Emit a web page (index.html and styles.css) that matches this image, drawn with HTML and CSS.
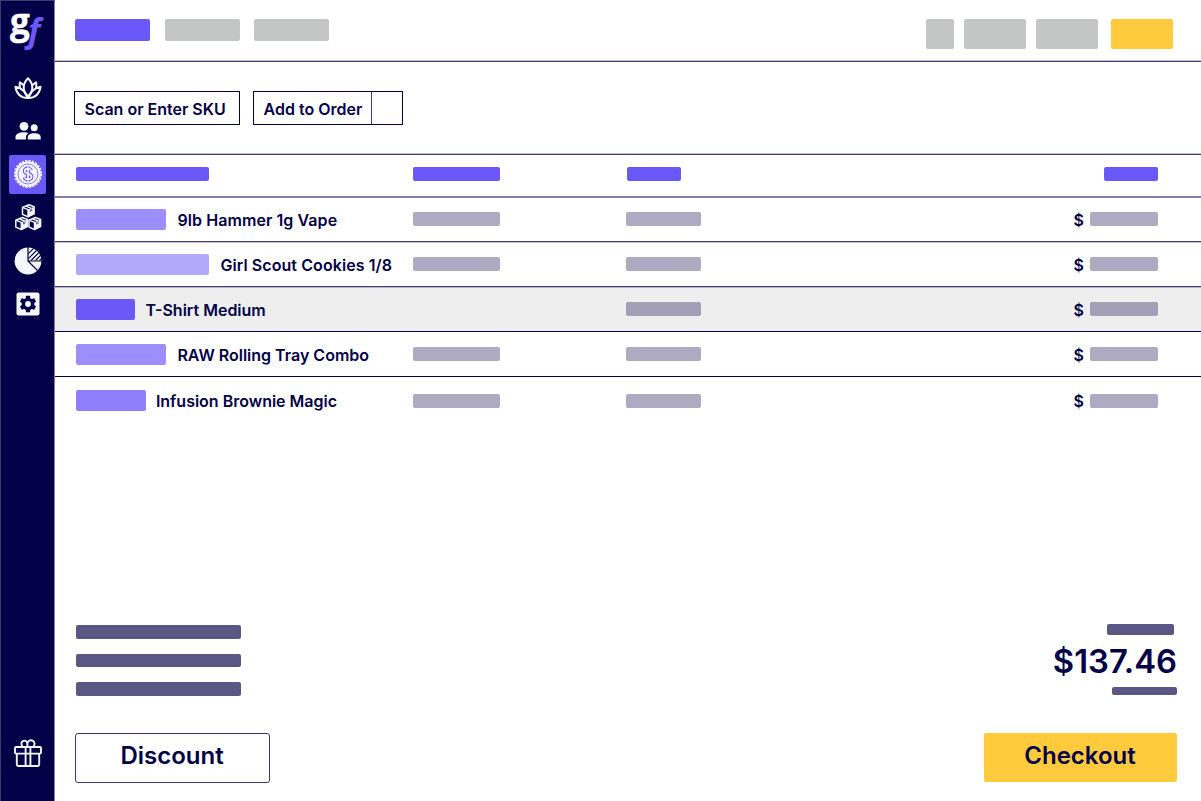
FILE: index.html
```html
<!DOCTYPE html>
<html lang="en">
<head>
<meta charset="utf-8">
<title>Point of sale</title>
<link rel="stylesheet" href="styles.css">
</head>
<body>
<div class="app">
  <aside class="sidebar">
    <div class="logo"><span class="logo-g">g</span><span class="logo-f">f</span></div>
    <nav class="nav">
      <a class="nav-item">
        <svg width="28" height="24" viewBox="0 0 28 24" fill="none" stroke="#f5f5fc" stroke-width="2" stroke-linejoin="round">
          <path d="M14 2.200C10.600 5.500 9.200 9 9.800 13.200C10.400 17 12 19.800 14 21.800C16 19.800 17.600 17 18.200 13.200C18.800 9 17.400 5.500 14 2.200Z"/>
          <path d="M9.900 9.500C8.500 8 7.200 7 5.900 6.300C5.500 8.600 5.600 10.800 6.100 12.900"/>
          <path d="M18.100 9.500C19.500 8 20.800 7 22.100 6.300C22.500 8.600 22.400 10.800 21.900 12.900"/>
          <path d="M14 21.800C12.500 17 7.500 11.500 1.400 10.800C2.500 17 6.500 22 14 21.900C21.500 22 25.500 17 26.600 10.800C20.500 11.500 15.500 17 14 21.800Z"/>
        </svg>
      </a>
      <a class="nav-item">
        <svg width="26" height="20" viewBox="0 0 26 20" fill="#f5f5fc">
          <circle cx="9" cy="5.300" r="4.400"/><circle cx="19.200" cy="6.800" r="3.500"/>
          <path d="M.5 18.500V16C.5 12.900 4 11.200 8.800 11.200C10.900 11.200 12.400 11.500 13.500 12C11.900 13.100 11 14.500 11 16.300V18.500Z"/>
          <path d="M12.800 18.500V16.300C12.800 13.700 15.500 12.300 19.300 12.300C23.100 12.300 25.700 13.700 25.700 16.300V18.500Z"/>
        </svg>
      </a>
      <a class="nav-item active">
        <svg width="30" height="30" viewBox="0 0 30 30">
          <circle cx="15" cy="15" r="12.600" fill="#f5f5fc"/>
          <circle cx="15" cy="15" r="13" fill="none" stroke="#f5f5fc" stroke-width="2" stroke-dasharray="2.300 1.103"/>
          <circle cx="15" cy="15" r="10" fill="none" stroke="#6b58f8" stroke-width=".8"/>
          <path d="M18.300 11.400C17.500 10.200 16.400 9.700 14.900 9.700C12.900 9.700 11.700 10.700 11.700 12.200C11.700 15.700 18.500 14 18.500 17.600C18.500 19.300 17.100 20.300 15.100 20.300C13.300 20.300 12 19.600 11.400 18.200M15 7.600V22.400" fill="none" stroke="#6b58f8" stroke-width="3.800"/>
          <path d="M18.200 11.500C17.500 10.200 16.400 9.700 14.900 9.700C12.900 9.700 11.700 10.700 11.700 12.200C11.700 15.700 18.500 14 18.500 17.600C18.500 19.300 17.100 20.300 15.100 20.300C13.300 20.300 12 19.600 11.600 18.400M15 8.100V21.900" fill="none" stroke="#f5f5fc" stroke-width="1.700"/>
        </svg>
      </a>
      <a class="nav-item">
        <svg width="28" height="28" viewBox="0 0 28 28">
          <defs>
            <g id="cube" stroke-linejoin="round">
              <path d="M1 3.600L7.400 1L12.600 3V10L6.500 13L1 10.600Z" fill="#020046" stroke="#f5f5fc" stroke-width="1.500"/>
              <path d="M6.500 5.800L12.600 3V10L6.500 13Z" fill="#f5f5fc"/>
              <path d="M1 3.600L6.500 5.800V13M4.400 2.300L9.900 4.500" fill="none" stroke="#f5f5fc" stroke-width="1.400"/>
              <path d="M8.700 5.400V7.600L10.200 6.900V4.700" fill="none" stroke="#020046" stroke-width=".6"/>
            </g>
          </defs>
          <use href="#cube" x="7.500" y="0.800"/><use href="#cube" x="0.800" y="13.500"/><use href="#cube" x="14" y="13.500"/>
        </svg>
      </a>
      <a class="nav-item">
        <svg width="28" height="28" viewBox="0 0 28 28">
          <defs><clipPath id="quarter"><path d="M14.300 13.400V.5A13.200 13.200 0 0 1 27.200 13.400Z"/></clipPath></defs>
          <circle cx="14" cy="14" r="13.400" fill="#f5f5fc"/>
          <path d="M14 0V14H28M14 14L23.500 23.500" fill="none" stroke="#020046" stroke-width="1.200"/>
          <g clip-path="url(#quarter)" stroke="#020046" stroke-width="1.200">
            <path d="M10 11L22-1M12 14L27-1M16 14.500L31-.5M20.500 14.500L35 0M25 14L38 1"/>
          </g>
        </svg>
      </a>
      <a class="nav-item">
        <svg width="24" height="24" viewBox="0 0 24 24">
          <rect x=".5" y=".5" width="23" height="23" rx="2" fill="#f5f5fc"/>
          <g fill="#020046">
            <circle cx="12" cy="12" r="6.300"/>
            <rect x="9.900" y="3.800" width="4.200" height="16.400" rx=".5"/><rect x="9.900" y="3.800" width="4.200" height="16.400" rx=".5" transform="rotate(60 12 12)"/><rect x="9.900" y="3.800" width="4.200" height="16.400" rx=".5" transform="rotate(120 12 12)"/>
          </g>
          <circle cx="12" cy="12" r="2.900" fill="#f5f5fc"/>
        </svg>
      </a>
    </nav>
    <a class="gift">
      <svg width="28" height="30" viewBox="0 0 28 30" fill="none" stroke="#f5f5fc" stroke-width="1.900">
        <rect x="1" y="9" width="26" height="6.600" rx="1"/>
        <path d="M2.800 15.600V26.500Q2.800 28 4.300 28H23.700Q25.200 28 25.200 26.500V15.600M11.600 9V28M16.400 9V28"/>
        <path d="M13.300 8.500V5A3 3 0 1 0 8.500 8M13.400 9V5.500A3.600 3.600 0 1 1 19.500 8.500"/>
      </svg>
    </a>
  </aside>
  <main class="main">
    <header class="topbar">
      <div class="tabs"><span class="tab current"></span><span class="tab"></span><span class="tab"></span></div>
      <div class="actions"><span class="action small"></span><span class="action"></span><span class="action"></span><span class="action primary"></span></div>
    </header>
    <hr class="rule late">
    <section class="toolbar">
      <div class="sku">Scan or Enter SKU</div>
      <div class="add"><span class="add-label">Add to Order</span><span class="add-more"></span></div>
    </section>
    <hr class="rule late">
    <section class="table">
      <div class="row head"><span class="bar wide"></span><span class="bar category"></span><span class="bar qty"></span><span class="bar price"></span></div>
      <hr class="rule even">
      <div class="row"><div class="product"><span class="swatch violet w90"></span><span class="name roomy">9lb Hammer 1g Vape</span></div><span class="bar category"></span><span class="bar qty"></span><div class="cost">$<span class="bar"></span></div></div>
      <hr class="rule early">
      <div class="row"><div class="product"><span class="swatch pale w133"></span><span class="name roomy">Girl Scout Cookies 1/8</span></div><span class="bar category"></span><span class="bar qty"></span><div class="cost">$<span class="bar"></span></div></div>
      <hr class="rule early selected-rule">
      <div class="row selected"><div class="product"><span class="swatch strong w59"></span><span class="name">T-Shirt Medium</span></div><span></span><span class="bar qty"></span><div class="cost">$<span class="bar"></span></div></div>
      <hr class="rule single">
      <div class="row tall"><div class="product"><span class="swatch violet w90"></span><span class="name">RAW Rolling Tray Combo</span></div><span class="bar category"></span><span class="bar qty"></span><div class="cost">$<span class="bar"></span></div></div>
      <hr class="rule single">
      <div class="row last"><div class="product"><span class="swatch medium w69"></span><span class="name">Infusion Brownie Magic</span></div><span class="bar category"></span><span class="bar qty"></span><div class="cost">$<span class="bar"></span></div></div>
    </section>
    <footer class="footer">
      <div class="summary"><span class="line"></span><span class="line"></span><span class="line"></span><div class="button discount">Discount</div></div>
      <div class="totals"><span class="line due"></span><div class="total">$137.46</div><span class="line tax"></span><div class="button checkout">Checkout</div></div>
    </footer>
  </main>
</div>
</body>
</html>
```
FILE: styles.css
```css
* { box-sizing: border-box; }
body { margin: 0; font-family: Inter, sans-serif; color: #020046; background: #fff; overflow: hidden; }
.app { display: flex; width: 1201px; height: 801px; }

.sidebar { width: 55px; flex: none; display: flex; flex-direction: column; background: #020046; border: 1px solid #3d3b72; border-right-color: #817fa3; border-bottom: 0; }
.logo { height: 67px; padding-left: 9px; display: flex; font-family: "Open Sans", sans-serif; white-space: nowrap; color: #fff; }
.logo-g { width: 18px; font-size: 35px; font-weight: 700; line-height: 40px; -webkit-text-stroke: .4px #fff; }
.logo-f { font-size: 33px; line-height: 57px; font-style: italic; font-weight: 700; color: #6b58f8; }
.nav { display: flex; flex-direction: column; gap: 4.300px; }
.nav-item { width: 37px; height: 39px; margin-left: 8px; display: flex; align-items: center; justify-content: center; border-radius: 2px; }
.nav-item.active { background: #6b58f8; }
.gift { margin-top: auto; padding: 0 0 33px 12.500px; line-height: 0; }

.main { flex: 1; display: flex; flex-direction: column; }
.rule { width: 100%; height: 2px; margin: 0; border: 0; flex: none; }
.late { border-top: 1px solid #c0bfd1; border-bottom: 1px solid #423c76; }
.even { background: #827fa8; }
.early { border-top: 1px solid #423f74; border-bottom: 1px solid #bfbfd1; }
.selected-rule { border-bottom-color: #b3b2c6; }
.single { height: 1px; background: #020046; }

.topbar { height: 60px; padding: 19px 28px 0 20px; display: flex; justify-content: space-between; }
.tabs { display: flex; gap: 14.500px; }
.tab { width: 75px; height: 22px; border-radius: 2px; background: #c4c6c5; }
.tab.current { background: #6b58f8; }
.actions { display: flex; gap: 10px; }
.action { width: 62px; height: 30px; border-radius: 2px; background: #c4c6c5; }
.action.small { width: 28px; }
.action.primary { margin-left: 3px; background: #ffcb3d; }

.toolbar { height: 91px; padding: 29px 19px; display: flex; gap: 13px; font-size: 16px; font-weight: 600; line-height: 35px; }
.sku { width: 166px; height: 34px; padding-left: 9.500px; border: 1px solid #020046; }
.add { width: 150px; height: 34px; display: flex; border: 1px solid #020046; white-space: nowrap; }
.add-label { width: 118px; padding-left: 9.500px; border-right: 1px solid #423c76; }

.row { height: 43px; padding-left: 21px; display: grid; grid-template-columns: 337px 213.400px 447px 84.600px; align-items: center; font-size: 16px; font-weight: 600; }
.head { height: 41px; padding-bottom: 3px; }
.selected { background: #eee; }
.row.tall { height: 44px; }
.tall .name, .tall .cost { padding-top: 1px; }
.row.last { height: 48px; }
.bar { height: 14px; border-radius: 2px; background: #adaac1; }
.row:not(.head) > .bar { margin-top: -1px; }
.cost .bar { margin-top: -1px; }
.selected .bar { background: #a29fb7; }
.category { width: 87px; }
.qty { width: 75px; }
.head .bar { background: #6b58f8; }
.head .qty { width: 54px; margin-left: 1px; }
.head .wide { width: 133px; }
.head .price { width: 54px; margin-left: 30.600px; }
.product { display: flex; align-items: center; white-space: nowrap; }
.name { padding-left: .4px; }
.roomy { letter-spacing: .08px; }
.swatch { height: 21px; margin-right: 11px; border-radius: 2px; }
.w90 { width: 90px; }
.w133 { width: 133px; }
.w59 { width: 59px; margin-right: 10px; }
.w69 { width: 69.500px; margin-right: 10px; }
.last .swatch { margin-top: -1px; }
.violet { background: #9d8ffb; }
.pale { background: #b3a9fb; }
.strong { background: #6b58f8; }
.medium { background: #8f7ffb; }
.cost { display: flex; align-items: center; justify-content: space-between; }
.cost .bar { width: 68px; }

.footer { margin-top: auto; height: 177px; padding: 0 24px 0 21px; display: flex; justify-content: space-between; }
.summary { display: flex; flex-direction: column; gap: 15px; padding-top: 1px; }
.line { width: 165px; height: 13.500px; border-radius: 2px; background: #5a5785; }
.button { height: 50px; border-radius: 2px; font-size: 24px; font-weight: 600; line-height: 46px; text-align: center; }
.discount { width: 195px; margin: 22px 0 0 -1px; padding-right: 1px; border: 1px solid #3a3870; border-radius: 3px; line-height: 44px; }
.totals { display: flex; flex-direction: column; align-items: flex-end; }
.due { width: 67px; height: 11px; margin-right: 3px; }
.total { height: 52px; font-size: 32.800px; font-weight: 600; line-height: 53px; }
.tax { width: 65px; height: 8px; }
.checkout { width: 193px; height: 49px; margin-top: 38px; padding-right: 1px; background: #ffcb3d; }
```
